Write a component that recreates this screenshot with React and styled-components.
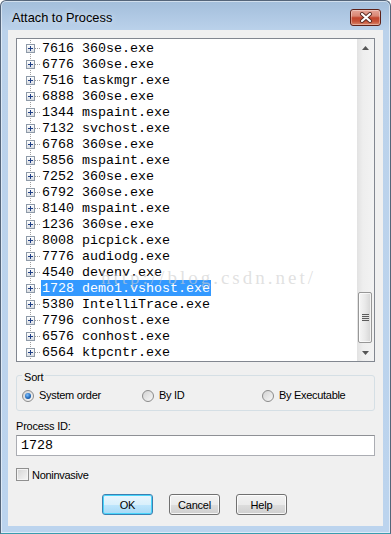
import React from 'react';
import styled, { createGlobalStyle } from 'styled-components';

const GlobalStyle = createGlobalStyle`
  html, body { margin: 0; padding: 0; background: #ffffff; }
  body { width: 391px; height: 534px; overflow: hidden; font-family: "Liberation Sans", Arial, sans-serif; }
  * { box-sizing: border-box; }
`;

const Window = styled.div`
  width: 391px;
  height: 534px;
  display: flex;
  flex-direction: column;
  background: linear-gradient(to bottom, #a3bedb 0px, #bbd2eb 30px, #bcd4ee 100%);
  border: 1px solid #55657a;
  border-bottom-color: #3a9cae;
  border-radius: 6px 6px 0 0;
  box-shadow: inset 0 0 0 1px rgba(255, 255, 255, 0.5);
`;

const TitleBar = styled.div`
  height: 29px;
  flex: none;
  display: flex;
  align-items: center;
  justify-content: space-between;
  padding: 3px 9px 0 11px;
`;

const Title = styled.div`
  font-size: 12.8px;
  color: #000;
  text-shadow: 0 0 6px rgba(255, 255, 255, 0.8);
`;

const CloseButton = styled.div`
  width: 31px;
  height: 17px;
  border: 1px solid #5e2118;
  border-radius: 3px;
  display: flex;
  align-items: center;
  justify-content: center;
  background: linear-gradient(to bottom, #e6a598 0%, #d98775 40%, #c2452d 52%, #c65338 75%, #d9866a 100%);
  box-shadow: inset 0 0 0 1px rgba(255, 255, 255, 0.35);
`;

const Content = styled.div`
  flex: 1;
  margin: 0 7px 7px;
  background: #f0f0f0;
  padding: 8px 8px 0;
  display: flex;
  flex-direction: column;
`;

const ListBox = styled.div`
  position: relative;
  height: 324px;
  flex: none;
  border: 1px solid #828790;
  background: #ffffff;
  display: flex;
  overflow: hidden;
`;

const TreeRows = styled.div`
  flex: 1;
  padding-top: 1px;
  display: flex;
  flex-direction: column;
`;

const Row = styled.div`
  height: 16px;
  flex: none;
  display: flex;
  align-items: center;
  padding-left: 9px;
`;

const Gutter = styled.div`
  width: 9px;
  height: 16px;
  display: flex;
  align-items: center;
  background-image: linear-gradient(to bottom, #a0a0a0 50%, transparent 50%);
  background-size: 1px 2px;
  background-repeat: repeat-y;
  background-position: 4px 0;
`;

const PlusBox = styled.div`
  width: 9px;
  height: 9px;
  border: 1px solid #8e9aa8;
  background: linear-gradient(to bottom, #ffffff, #d9dde3);
  display: flex;
  align-items: center;
  justify-content: center;
`;

const Connector = styled.div`
  width: 6px;
  height: 1px;
  background-image: linear-gradient(to right, #a0a0a0 50%, transparent 50%);
  background-size: 2px 1px;
`;

const ItemLabel = styled.div`
  height: 16px;
  line-height: 17px;
  padding: 0 1px;
  font-family: "Liberation Mono", "Courier New", monospace;
  font-size: 13.33px;
  white-space: pre;
  color: ${p => (p.$selected ? '#ffffff' : '#000000')};
  background: ${p => (p.$selected ? '#3399ff' : 'transparent')};
`;

const Watermark = styled.div`
  position: absolute;
  left: 84px;
  top: 228px;
  font-family: "Liberation Serif", "Times New Roman", serif;
  font-size: 19px;
  letter-spacing: 3px;
  color: rgba(205, 205, 205, 0.6);
  white-space: nowrap;
  pointer-events: none;
`;

const ScrollBar = styled.div`
  width: 17px;
  flex: none;
  display: flex;
  flex-direction: column;
  background: linear-gradient(to right, #e2e2e2, #eeeeee 35%, #f3f3f3);
`;

const ScrollArrow = styled.div`
  height: 17px;
  flex: none;
  display: flex;
  align-items: center;
  justify-content: center;
`;

const Track = styled.div`
  flex: 1;
  display: flex;
  flex-direction: column;
  justify-content: flex-end;
  padding: 0 2px 1px 1px;
`;

const Thumb = styled.div`
  height: 51px;
  border: 1px solid #979797;
  border-radius: 2px;
  background: linear-gradient(to right, #f6f6f6, #e9e9e9 50%, #d5d5d5);
  box-shadow: inset 0 0 0 1px rgba(255, 255, 255, 0.7);
  display: flex;
  align-items: center;
  justify-content: center;
`;

const Grip = styled.div`
  width: 7px;
  height: 7px;
  background: repeating-linear-gradient(to bottom, #5c5c5c 0 1px, #e4e4e4 1px 2px);
`;

const GroupBox = styled.fieldset`
  margin: 4px 0 0;
  padding: 0 0 8px 5px;
  border: 1px solid #d5dfe5;
  border-radius: 3px;
  min-width: 0;
`;

const Legend = styled.legend`
  padding: 5px 2px 0;
  font-size: 11px;
  line-height: 13px;
  letter-spacing: -0.2px;
  color: #000;
`;

const RadioRow = styled.div`
  margin-top: 5px;
  display: grid;
  grid-template-columns: repeat(3, 120px);
  height: 13px;
`;

const Option = styled.label`
  display: flex;
  align-items: center;
  gap: 5px;
  font-size: 11px;
  letter-spacing: -0.3px;
  color: #000;
  line-height: 13px;
`;

const RadioCircle = styled.span`
  width: 12px;
  height: 12px;
  border-radius: 50%;
  border: 1px solid #8a8a8a;
  background: linear-gradient(135deg, #d2d2d2, #f7f7f7);
  display: flex;
  align-items: center;
  justify-content: center;
  &::after {
    content: '';
    width: 6px;
    height: 6px;
    border-radius: 50%;
    display: ${p => (p.$checked ? 'block' : 'none')};
    background: radial-gradient(circle at 40% 35%, #7ec0ff, #1d64b4 60%, #0f3d7a);
  }
`;

const FieldLabel = styled.div`
  margin-top: 9px;
  font-size: 11px;
  line-height: 13px;
  letter-spacing: -0.2px;
  color: #000;
`;

const TextInput = styled.div`
  margin-top: 2px;
  height: 21px;
  border: 1px solid #abadb3;
  border-top-color: #8e9095;
  background: #ffffff;
  padding-left: 4px;
  display: flex;
  align-items: center;
  font-family: "Liberation Mono", "Courier New", monospace;
  font-size: 13.33px;
  color: #000;
`;

const CheckRow = styled.label`
  margin-top: 12px;
  height: 13px;
  display: flex;
  align-items: center;
  gap: 3px;
  font-size: 11px;
  letter-spacing: -0.3px;
  color: #000;
`;

const CheckBox = styled.span`
  width: 13px;
  height: 13px;
  border: 1px solid #8f8f8f;
  background: linear-gradient(135deg, #d4d4d4, #f6f6f6);
  box-shadow: inset 0 0 0 1px #f4f4f4;
`;

const ButtonRow = styled.div`
  margin-top: 13px;
  display: flex;
  justify-content: center;
  gap: 16px;
  padding-right: 2px;
`;

const Button = styled.div`
  width: 51px;
  height: 21px;
  border-radius: 3px;
  border: 1px solid ${p => (p.$default ? '#3c7fb1' : '#707070')};
  background: ${p =>
    p.$default
      ? 'linear-gradient(to bottom, #eaf6fd 0%, #d9f0fc 50%, #bee6fd 51%, #a7d9f5 100%)'
      : 'linear-gradient(to bottom, #f2f2f2 0%, #ebebeb 50%, #dddddd 51%, #cfcfcf 100%)'};
  box-shadow: inset 0 0 0 1px ${p => (p.$default ? '#48d5fb' : 'rgba(255,255,255,0.8)')};
  display: flex;
  align-items: center;
  justify-content: center;
  font-size: 11px;
  letter-spacing: -0.2px;
  color: #000;
`;

const processes = [
  ['7616', '360se.exe'],
  ['6776', '360se.exe'],
  ['7516', 'taskmgr.exe'],
  ['6888', '360se.exe'],
  ['1344', 'mspaint.exe'],
  ['7132', 'svchost.exe'],
  ['6768', '360se.exe'],
  ['5856', 'mspaint.exe'],
  ['7252', '360se.exe'],
  ['6792', '360se.exe'],
  ['8140', 'mspaint.exe'],
  ['1236', '360se.exe'],
  ['8008', 'picpick.exe'],
  ['7776', 'audiodg.exe'],
  ['4540', 'devenv.exe'],
  ['1728', 'demo1.vshost.exe'],
  ['5380', 'IntelliTrace.exe'],
  ['7796', 'conhost.exe'],
  ['6576', 'conhost.exe'],
  ['6564', 'ktpcntr.exe'],
];

const Plus = () => (
  <svg width="5" height="5" viewBox="0 0 5 5">
    <path d="M0 2.5H5M2.5 0V5" stroke="#1f3f85" strokeWidth="1" />
  </svg>
);

export default function App() {
  return (
    <>
      <GlobalStyle />
      <Window>
        <TitleBar>
          <Title>Attach to Process</Title>
          <CloseButton>
            <svg width="14" height="11" viewBox="0 0 14 11">
              <path d="M3 2L11 9M11 2L3 9" stroke="#5a2a22" strokeWidth="4" strokeLinecap="round" />
              <path d="M3 2L11 9M11 2L3 9" stroke="#ffffff" strokeWidth="2.2" strokeLinecap="round" />
            </svg>
          </CloseButton>
        </TitleBar>
        <Content>
          <ListBox>
            <TreeRows>
              {processes.map(([pid, name]) => (
                <Row key={pid + name}>
                  <Gutter>
                    <PlusBox>
                      <Plus />
                    </PlusBox>
                  </Gutter>
                  <Connector />
                  <ItemLabel $selected={pid === '1728'}>{`${pid} ${name}`}</ItemLabel>
                </Row>
              ))}
            </TreeRows>
            <ScrollBar>
              <ScrollArrow>
                <svg width="7" height="4" viewBox="0 0 7 4">
                  <path d="M3.5 0L7 4H0Z" fill="#555" />
                </svg>
              </ScrollArrow>
              <Track>
                <Thumb>
                  <Grip />
                </Thumb>
              </Track>
              <ScrollArrow>
                <svg width="7" height="4" viewBox="0 0 7 4">
                  <path d="M0 0H7L3.5 4Z" fill="#555" />
                </svg>
              </ScrollArrow>
            </ScrollBar>
            <Watermark>http://blog.csdn.net/</Watermark>
          </ListBox>

          <GroupBox>
            <Legend>Sort</Legend>
            <RadioRow>
              <Option>
                <RadioCircle $checked />
                System order
              </Option>
              <Option>
                <RadioCircle />
                By ID
              </Option>
              <Option>
                <RadioCircle />
                By Executable
              </Option>
            </RadioRow>
          </GroupBox>

          <FieldLabel>Process ID:</FieldLabel>
          <TextInput>1728</TextInput>

          <CheckRow>
            <CheckBox />
            Noninvasive
          </CheckRow>

          <ButtonRow>
            <Button $default>OK</Button>
            <Button>Cancel</Button>
            <Button>Help</Button>
          </ButtonRow>
        </Content>
      </Window>
    </>
  );
}
